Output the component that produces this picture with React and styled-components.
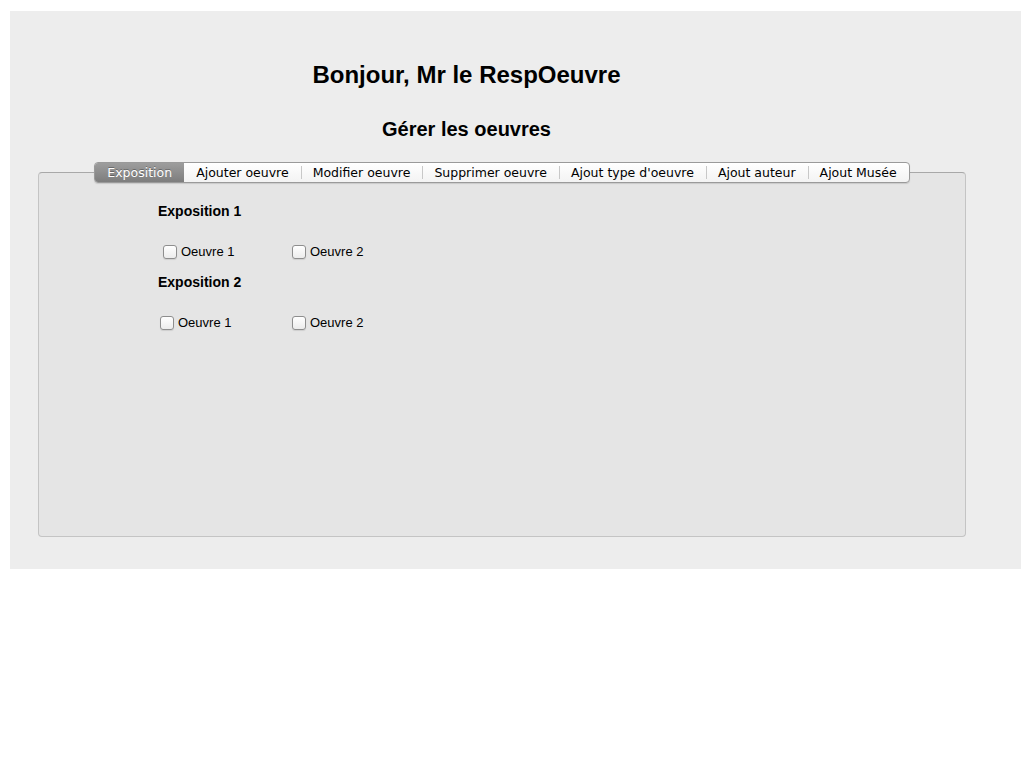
import React, { useState } from 'react';
import styled, { createGlobalStyle } from 'styled-components';

const GlobalStyle = createGlobalStyle`
  body {
    margin: 0;
    background: #ffffff;
    font-family: "Liberation Sans", Arial, sans-serif;
  }
`;

const Page = styled.div`
  margin: 11px 3px 0 10px;
  height: 558px;
  background: #ededed;
  padding-top: 1px;
  box-sizing: border-box;
`;

const Heading = styled.h1`
  margin: 49px 0 0 0;
  padding-right: 98px;
  text-align: center;
  font-size: 24px;
  font-weight: bold;
  color: #000;
  line-height: 28px;
`;

const SubHeading = styled.h2`
  margin: 29px 0 0 0;
  padding-right: 98px;
  text-align: center;
  font-size: 20px;
  font-weight: bold;
  color: #000;
  line-height: 22px;
`;

const TabArea = styled.div`
  margin: 22px 55px 0 28px;
  display: flex;
  flex-direction: column;
`;

const TabBar = styled.div`
  align-self: center;
  position: relative;
  z-index: 1;
  display: flex;
  height: 21px;
  margin-bottom: -11px;
  border: 1px solid #9a9a9a;
  border-radius: 4px;
  background: linear-gradient(#ffffff, #f3f3f3);
  box-shadow: 0 1px 1px rgba(0, 0, 0, 0.12);
  box-sizing: border-box;
  overflow: hidden;
`;

const Tab = styled.button`
  appearance: none;
  border: none;
  margin: 0;
  padding: 0 12px;
  height: 100%;
  font-family: "DejaVu Sans", "Open Sans", sans-serif;
  font-size: 12.5px;
  cursor: pointer;
  color: ${(p) => (p.$active ? '#ffffff' : '#000000')};
  background: ${(p) =>
    p.$active ? 'linear-gradient(#9d9d9d, #7d7d7d)' : 'transparent'};
  text-shadow: ${(p) => (p.$active ? '0 -1px 0 rgba(0,0,0,0.3)' : 'none')};
  position: relative;

  & + &::before {
    content: '';
    position: absolute;
    left: 0;
    top: 3px;
    bottom: 3px;
    width: 1px;
    background: #c8c8c8;
  }
`;

const Panel = styled.div`
  height: 365px;
  background: #e5e5e5;
  border: 1px solid #c4c4c4;
  border-top-color: #a8a8a8;
  border-radius: 4px;
  box-sizing: border-box;
  padding: 30px 0 0 119px;
`;

const Group = styled.div`
  margin-bottom: 15px;
`;

const GroupTitle = styled.div`
  font-size: 14px;
  font-weight: bold;
  color: #000;
  line-height: 16px;
`;

const Items = styled.div`
  display: flex;
  margin-top: 25px;
  padding-left: ${(p) => p.$indent}px;
`;

const Item = styled.label`
  display: flex;
  align-items: center;
  width: ${(p) => p.$width}px;
  font-size: 13px;
  color: #000;
  line-height: 15px;
`;

const Check = styled.input`
  appearance: none;
  width: 14px;
  height: 14px;
  margin: 0 4px 0 0;
  border: 1px solid #8e8e8e;
  border-radius: 3px;
  background: linear-gradient(#ffffff, #ececec);
  box-shadow: 0 1px 1px rgba(0, 0, 0, 0.1);
  &:checked {
    background: linear-gradient(#8fb8f0, #3a78d8);
  }
`;

const tabs = [
  'Exposition',
  'Ajouter oeuvre',
  'Modifier oeuvre',
  'Supprimer oeuvre',
  "Ajout type d'oeuvre",
  'Ajout auteur',
  'Ajout Musée',
];

const expositions = [
  { name: 'Exposition 1', indent: 5, first: 129 },
  { name: 'Exposition 2', indent: 2, first: 132 },
];

const App = () => {
  const [active, setActive] = useState(0);
  return (
    <>
      <GlobalStyle />
      <Page>
        <Heading>Bonjour, Mr le RespOeuvre</Heading>
        <SubHeading>Gérer les oeuvres</SubHeading>
        <TabArea>
          <TabBar>
            {tabs.map((t, i) => (
              <Tab key={t} $active={i === active} onClick={() => setActive(i)}>
                {t}
              </Tab>
            ))}
          </TabBar>
          <Panel>
            {expositions.map((e) => (
              <Group key={e.name}>
                <GroupTitle>{e.name}</GroupTitle>
                <Items $indent={e.indent}>
                  <Item $width={e.first}>
                    <Check type="checkbox" />
                    Oeuvre 1
                  </Item>
                  <Item $width={100}>
                    <Check type="checkbox" />
                    Oeuvre 2
                  </Item>
                </Items>
              </Group>
            ))}
          </Panel>
        </TabArea>
      </Page>
    </>
  );
};

export default App;
